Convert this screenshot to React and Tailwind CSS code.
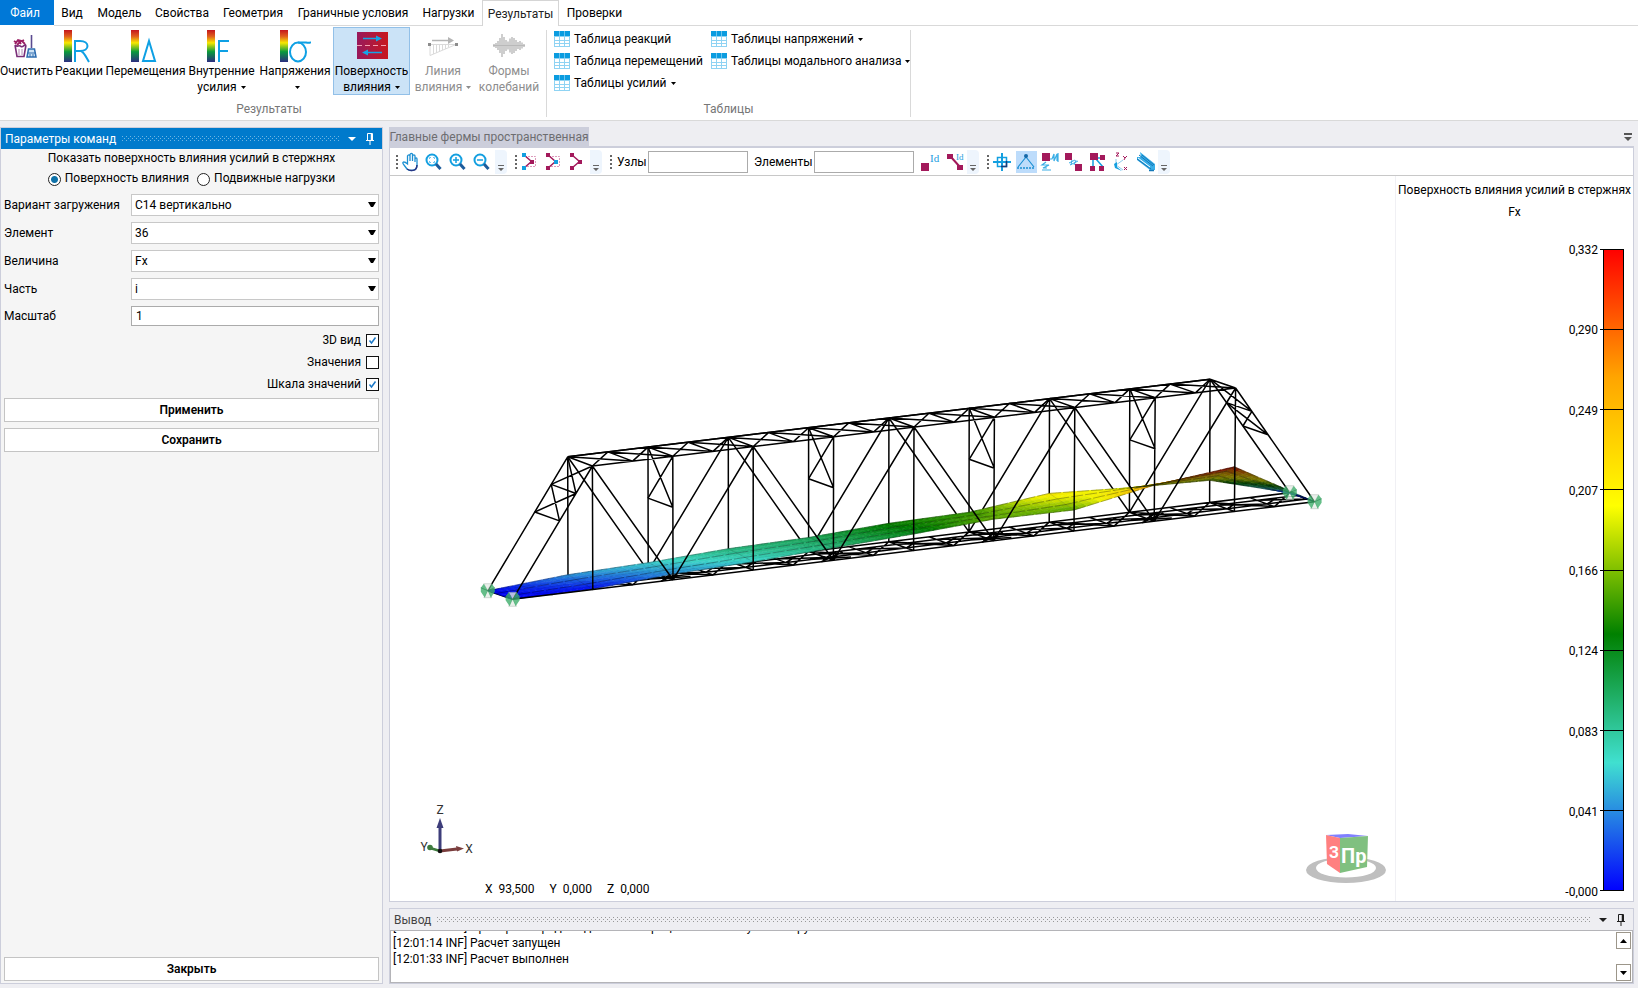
import React, { useState } from "react";

const tabs = [
  { name: "Вид", width: "w-[36px]" },
  { name: "Модель", width: "w-[59px]" },
  { name: "Свойства", width: "w-[66px]" },
  { name: "Геометрия", width: "w-[76px]" },
  { name: "Граничные условия", width: "w-[124px]" },
  { name: "Нагрузки", width: "w-[67px]" },
  { name: "Результаты", width: "w-[77px]" },
  { name: "Проверки", width: "w-[71px]" },
];

const legendValues = ["0,332", "0,290", "0,249", "0,207", "0,166", "0,124", "0,083", "0,041", "-0,000"];

// ---------- ribbon icons ----------

const Spectrum = ({ children }) => (
  <svg width="32" height="34" viewBox="0 0 32 34" fill="none" stroke="#0ea0e4" strokeWidth="2">
    <defs>
      <linearGradient id="spectrum" x1="0" y1="0" x2="0" y2="1">
        <stop offset="0" stopColor="#c4161c" />
        <stop offset="0.2" stopColor="#e0601c" />
        <stop offset="0.4" stopColor="#f8e800" />
        <stop offset="0.68" stopColor="#0a9a3c" />
        <stop offset="1" stopColor="#2c2c80" />
      </linearGradient>
    </defs>
    <rect x="1" y="1" width="8" height="32" fill="url(#spectrum)" stroke="none" />
    {children}
  </svg>
);

const CleanIcon = () => (
  <svg width="32" height="34" viewBox="0 0 32 34" fill="none">
    <path d="M4 16 L6 27.500 H13 L15 16 M4 16 C6 19 8 15 10 17.500 C12 19 13 15 15 16" stroke="#7a2e78" strokeWidth="1.600" />
    <path d="M3 12 L6 14 M7 11 L10 15 M4 15 L7 11 L11 12 L14 15 M11 12 L13 11 M6 16 L10 12" stroke="#9b1f64" strokeWidth="1.800" />
    <path d="M8 20 V26 M11 20 V26" stroke="#b58ab5" />
    <path d="M20.500 6 V19" stroke="#5a4a90" strokeWidth="1.600" />
    <path d="M17.500 20 H23.500 L25 28 H16 Z" fill="#cfe3f5" stroke="#2f6db0" strokeWidth="1.500" />
    <path d="M17 24 H25 M19 25 V28 M22 25 V28" stroke="#2f6db0" />
  </svg>
);

const SurfaceIcon = () => (
  <svg width="32" height="34" viewBox="0 0 32 34" fill="none">
    <defs>
      <linearGradient id="surfaceBg" x1="0" y1="0" x2="1" y2="0">
        <stop offset="0" stopColor="#98195c" />
        <stop offset="1" stopColor="#c8171f" />
      </linearGradient>
    </defs>
    <rect x="1" y="3" width="31" height="27" fill="url(#surfaceBg)" />
    <path d="M1 16.500 H32" stroke="#f4a0b0" strokeDasharray="5 3" />
    <path d="M7 9.500 H23 M10 23.500 H26" stroke="#14a5e8" strokeWidth="1.500" />
    <path d="M20 6.500 L26 9.500 L20 12.500 Z M12 20.500 L6 23.500 L12 26.500 Z" fill="#14a5e8" />
  </svg>
);

const LineIcon = () => (
  <svg width="32" height="34" viewBox="0 0 32 34" fill="none" stroke="#dadada">
    <path d="M5 11.500 H22" strokeWidth="1.500" stroke="#b4b4b4" />
    <path d="M21 8 L27 11.500 L21 15 Z" fill="#b4b4b4" stroke="none" />
    <path d="M3 15.500 H29 L3 26.500 Z M6.500 16 V25 M9.500 16 V24 M12.500 16 V22 M15.500 16 V21 M18.500 16 V20 M21.500 16 V18" />
    <path d="M1 14 h3 v3 h-3 z M28 14 h3 v3 h-3 z" fill="#8c8c8c" stroke="none" />
  </svg>
);

const waveHeights = [3, 5, 9, 15, 23, 17, 11, 8, 14, 17, 15, 11, 7, 9, 6, 3];

const WaveIcon = () => (
  <svg width="32" height="34" viewBox="0 0 32 34" stroke="#b9b9b9" strokeWidth="1.400">
    {waveHeights.map((h, i) => (
      <line key={i} x1={1 + i * 2} x2={1 + i * 2} y1={16.5 - h / 2} y2={16.5 + h / 2} />
    ))}
    <line x1="0" x2="32" y1="16.500" y2="16.500" strokeWidth="1" />
  </svg>
);

const TableIcon = () => (
  <svg width="16" height="16" viewBox="0 0 16 16" className="shrink-0">
    <rect width="16" height="16" fill="#8fd3f3" />
    <rect width="16" height="5" fill="#0a9ce0" />
    <path d="M5.500 0 V5 M10.500 0 V5" stroke="#6cc4ee" />
    <path d="M1 6 h4 v3 h-4 z M6 6 h4 v3 h-4 z M11 6 h4 v3 h-4 z M1 10 h4 v2 h-4 z M6 10 h4 v2 h-4 z M11 10 h4 v2 h-4 z M1 13 h4 v2 h-4 z M6 13 h4 v2 h-4 z M11 13 h4 v2 h-4 z" fill="#fff" />
  </svg>
);

const Caret = () => (
  <svg width="5" height="3" viewBox="0 0 5 3" className="ml-1 inline-block shrink-0 align-middle" fill="currentColor">
    <path d="M0 0 H5 L2.500 3 Z" />
  </svg>
);

const RibbonButton = ({ icon, lines, caret, width, active, disabled }) => (
  <button
    disabled={disabled}
    className={`flex h-[68px] shrink-0 flex-col items-center border ${width} ${
      active ? "border-[#92c0e8] bg-[#cbe3f7]" : "border-transparent"
    } ${disabled ? "text-[#8d8d8d]" : "text-black"}`}
  >
    <span className="mt-px h-[34px]">{icon}</span>
    {lines.map((line, i) => (
      <span key={i} className="block h-4 whitespace-nowrap leading-4">
        {line}
        {caret && i === lines.length - 1 && <Caret />}
      </span>
    ))}
  </button>
);

const TableButton = ({ label, caret }) => (
  <button className="flex h-[22px] items-center whitespace-nowrap">
    <TableIcon />
    <span className="ml-1">{label}</span>
    {caret && <Caret />}
  </button>
);

const Ribbon = () => (
  <header className="shrink-0 border-b border-[#d9d9d9] bg-white">
    <nav className="flex h-[26px]">
      <button className="h-[25px] w-[54px] shrink-0 bg-[#0078d7] pr-1 text-white">Файл</button>
      {tabs.map((tab) => (
        <button
          key={tab.name}
          className={`h-[26px] shrink-0 whitespace-nowrap pt-px text-center ${tab.width} ${
            tab.name === "Результаты"
              ? "border border-b-0 border-[#d5d5d5] text-[#222]"
              : "border-b border-[#d9d9d9]"
          }`}
        >
          {tab.name}
        </button>
      ))}
      <div className="flex-1 border-b border-[#d9d9d9]" />
    </nav>
    <div className="flex h-[94px] pt-px">
      <section className="flex w-[546px] shrink-0 flex-col">
        <div className="flex">
          <RibbonButton width="w-[53px]" icon={<CleanIcon />} lines={["Очистить"]} />
          <RibbonButton
            width="w-[52px]"
            icon={<Spectrum><path d="M12 33 V12 H17 C27 12 27 22 17 22 H12 M18 22 C21 23 23 28 26 33" /></Spectrum>}
            lines={["Реакции"]}
          />
          <RibbonButton
            width="w-[81px]"
            icon={<Spectrum><path d="M13 32 L19 12 L25 32 Z" /></Spectrum>}
            lines={["Перемещения"]}
          />
          <RibbonButton
            width="w-[71px]"
            icon={<Spectrum><path d="M13 33 V12 H23 M13 22 H22" /></Spectrum>}
            lines={["Внутренние", "усилия"]}
            caret
          />
          <RibbonButton
            width="w-[76px]"
            icon={<Spectrum><ellipse cx="19" cy="23" rx="8" ry="9.500" /><path d="M19 13.500 H27 C29 14 31 14 32 13" /></Spectrum>}
            lines={["Напряжения", ""]}
            caret
          />
          <RibbonButton width="w-[77px]" icon={<SurfaceIcon />} lines={["Поверхность", "влияния"]} caret active />
          <RibbonButton width="w-[66px]" icon={<LineIcon />} lines={["Линия", "влияния"]} caret disabled />
          <RibbonButton width="w-[66px]" icon={<WaveIcon />} lines={["Формы", "колебаний"]} disabled />
        </div>
        <div className="mt-[6px] pr-2 text-center leading-4 text-[#777]">Результаты</div>
      </section>
      <section className="my-[3px] flex flex-col border-x border-[#d9d9d9] px-[7px]">
        <div className="-mt-[2px] grid grid-cols-[157px_192px]">
          <TableButton label="Таблица реакций" />
          <TableButton label="Таблицы напряжений" caret />
          <TableButton label="Таблица перемещений" />
          <TableButton label="Таблицы модального анализа" caret />
          <TableButton label="Таблицы усилий" caret />
        </div>
        <div className="mt-[7px] text-center leading-4 text-[#777]">Таблицы</div>
      </section>
    </div>
  </header>
);

// ---------- shared bits ----------

const PinIcon = () => (
  <svg width="8" height="12" viewBox="0 0 8 12" fill="none" stroke="currentColor">
    <path d="M1.500 7 V0.500 H6.500 V7 M0 7.500 H8 M4 8 V12" />
    <path d="M5.500 1 V7" strokeWidth="1.500" />
  </svg>
);

const Arrow = () => (
  <svg width="8" height="4" viewBox="0 0 8 4" fill="currentColor">
    <path d="M0 0 H8 L4 4 Z" />
  </svg>
);

const Grip = ({ id, color }) => (
  <svg className="h-[5px] min-w-0 flex-1" aria-hidden="true">
    <defs>
      <pattern id={id} width="4" height="4" patternUnits="userSpaceOnUse">
        <path d="M0 0 h1 v1 h-1 z M2 2 h1 v1 h-1 z" fill={color} />
      </pattern>
    </defs>
    <rect width="100%" height="5" fill={`url(#${id})`} />
  </svg>
);

// ---------- left panel ----------

const SelectRow = ({ id, label, value }) => (
  <div className="mb-[6px] flex items-center">
    <label htmlFor={id} className="w-[127px] shrink-0">{label}</label>
    <div className="relative flex-1">
      <select id={id} className="block h-[22px] w-full appearance-none border border-[#c8c8c8] bg-white px-[3px] leading-4">
        <option>{value}</option>
      </select>
      <svg className="pointer-events-none absolute top-[8px] right-[3px]" width="8" height="6" viewBox="0 0 8 6">
        <path d="M0 0 H8 L5 5 H3 Z" />
      </svg>
    </div>
  </div>
);

const Radio = ({ label, checked, onChange }) => (
  <label className="flex items-center">
    <input
      type="radio"
      name="mode"
      checked={checked}
      onChange={onChange}
      className="mt-[3px] mr-1 size-[13px] appearance-none rounded-full border border-[#222] bg-white bg-[radial-gradient(circle,#0f72a8_3px,transparent_4px)] not-checked:bg-none"
    />
    {label}
  </label>
);

const Check = ({ label, defaultChecked }) => (
  <label className="flex h-[22px] items-center justify-end">
    {label}
    <span className="relative ml-[5px] size-[13px]">
      <input
        type="checkbox"
        defaultChecked={defaultChecked}
        className="peer block size-[13px] appearance-none border border-[#111] bg-white"
      />
      <svg
        className="pointer-events-none absolute inset-0 hidden peer-checked:block"
        width="13" height="13" viewBox="0 0 13 13" fill="none" stroke="#1a78c8" strokeWidth="1.500"
      >
        <path d="M3.500 6.500 L5.500 9 L9.500 3.500" />
      </svg>
    </span>
  </label>
);

const PanelButton = ({ children }) => (
  <button className="h-6 w-full border border-[#c4c4c4] bg-white font-semibold">{children}</button>
);

const ParamsPanel = () => {
  const [mode, setMode] = useState("surface");

  return (
    <aside className="flex w-[383px] shrink-0 flex-col border border-[#cccedb] bg-[#f5f5f5]">
      <div className="flex h-[21px] shrink-0 items-center bg-[#007acc] pr-2 pl-1 text-white">
        <span className="mr-[6px]">Параметры команд</span>
        <Grip id="gripBlue" color="#6fb5e3" />
        <button className="ml-2" aria-label="Меню панели"><Arrow /></button>
        <button className="ml-[10px]" aria-label="Закрепить панель"><PinIcon /></button>
      </div>
      <div className="flex flex-1 flex-col px-[3px] pb-[2px]">
        <p className="mt-px text-center leading-4">Показать поверхность влияния усилий в стержнях</p>
        <div className="mt-[2px] mb-[6px] flex h-5 justify-center gap-2">
          <Radio label="Поверхность влияния" checked={mode === "surface"} onChange={() => setMode("surface")} />
          <Radio label="Подвижные нагрузки" checked={mode === "moving"} onChange={() => setMode("moving")} />
        </div>
        <SelectRow id="loadCase" label="Вариант загружения" value="С14 вертикально" />
        <SelectRow id="element" label="Элемент" value="36" />
        <SelectRow id="quantity" label="Величина" value="Fx" />
        <SelectRow id="part" label="Часть" value="i" />
        <div className="mb-[3px] flex items-center">
          <label htmlFor="scale" className="w-[127px] shrink-0">Масштаб</label>
          <input id="scale" defaultValue="1" className="h-5 min-w-0 flex-1 border border-[#ababab] bg-white px-1" />
        </div>
        <Check label="3D вид" defaultChecked />
        <Check label="Значения" />
        <Check label="Шкала значений" defaultChecked />
        <div className="mt-[3px] flex flex-1 flex-col gap-[6px]">
          <PanelButton>Применить</PanelButton>
          <PanelButton>Сохранить</PanelButton>
          <div className="mt-auto">
            <PanelButton>Закрыть</PanelButton>
          </div>
        </div>
      </div>
    </aside>
  );
};

// ---------- view toolbar ----------

const Dots = () => (
  <svg width="4" height="16" viewBox="0 0 4 16" className="shrink-0" fill="#666">
    <path d="M1 1 h2 v2 h-2 z M1 5 h2 v2 h-2 z M1 9 h2 v2 h-2 z M1 13 h2 v2 h-2 z" />
  </svg>
);

const Overflow = () => (
  <button className="mr-[7px] flex h-6 w-3 shrink-0 items-end justify-center rounded-r-sm bg-[#eef5fd] pb-[3px]" aria-label="Ещё">
    <svg width="6" height="6" viewBox="0 0 6 6" fill="#666">
      <path d="M0 0 h6 v1 h-6 z M0 3 h6 l-3 3 z" />
    </svg>
  </button>
);

const Tool = ({ label, active, children }) => (
  <button aria-label={label} className="flex h-[22px] w-6 shrink-0 items-center justify-center">
    <span className={`flex h-[22px] w-[21px] items-center justify-center ${active ? "bg-[#bddcfb]" : ""}`}>
      <svg width="20" height="20" viewBox="0 0 20 20" fill="none" strokeWidth="1.500">{children}</svg>
    </span>
  </button>
);

const Lens = ({ children }) => (
  <g transform="translate(-1 0)">
    <circle cx="8" cy="8" r="5.500" stroke="#139fe0" strokeWidth="2" />
    <path d="M12 12 L16.500 17" stroke="#1c5c9c" strokeWidth="3" />
    {children}
  </g>
);

const Hinge = ({ top, mid, dashed }) => (
  <>
    {dashed && <path d="M5 4.500 H15.500 V14.500 H5" stroke="#dc9abb" strokeWidth="1" strokeDasharray="2 1" />}
    <path d="M4 3 L11.500 9.500 L4 16" stroke="#a3195b" />
    <rect x="2" y="1" width="4" height="4" fill={top} />
    <rect x="10" y="8" width="4" height="4" fill={mid} />
    <rect x="2" y="14" width="4" height="4" fill={top} />
  </>
);

const Toolbar = () => (
  <div className="flex h-[28px] shrink-0 items-center border-b border-[#c8c8c8] bg-white pl-[5px]">
    <Dots />
    <Tool label="Сдвиг">
      <path d="M5 11 L3 10 C1 10 2 12 3 13 L6 17 C7 18.500 8 18.500 10 18.500 C14 18.500 16 17 16 13 V7 C16 5.500 14.500 5.500 14 7 V10 M14 8 V4 C14 2.500 12 2.500 11.500 4 V9 M11.500 6 V2.500 C11.500 1 9.500 1 9 2.500 V9 M9 6 V4 C9 2.500 7 2.500 6.500 4 L6.500 12 L4 10" stroke="#1b8fd2" strokeWidth="1.300" />
      <path d="M6 17 C9 19 16 20 16 13" stroke="#283583" />
    </Tool>
    <Tool label="Показать всё"><Lens><path d="M5.500 7 V5.500 H7 M9 5.500 H10.500 V7 M10.500 9 V10.500 H9 M7 10.500 H5.500 V9" stroke="#6bc3ee" strokeWidth="1" /></Lens></Tool>
    <Tool label="Увеличить"><Lens><path d="M5 8 H11 M8 5 V11" stroke="#139fe0" /></Lens></Tool>
    <Tool label="Уменьшить"><Lens><path d="M5 8 H11" stroke="#139fe0" /></Lens></Tool>
    <Overflow />
    <Dots />
    <Tool label="Выбор узлов"><Hinge top="#139fe0" mid="#a3195b" dashed /></Tool>
    <Tool label="Выбор элементов"><Hinge top="#a3195b" mid="#139fe0" dashed /></Tool>
    <Tool label="Выбор всего"><Hinge top="#a3195b" mid="#a3195b" /></Tool>
    <Overflow />
    <Dots />
    <label htmlFor="nodes" className="ml-[4px] w-[31px] shrink-0 whitespace-nowrap">Узлы</label>
    <input id="nodes" className="h-[22px] w-[100px] shrink-0 border border-[#ababab] bg-white px-1" />
    <label htmlFor="elements" className="ml-[6px] w-[60px] shrink-0 whitespace-nowrap">Элементы</label>
    <input id="elements" className="mr-[5px] h-[22px] w-[100px] shrink-0 border border-[#ababab] bg-white px-1" />
    <Tool label="Номера узлов">
      <rect x="0" y="11" width="8" height="8" fill="#a3195b" />
      <text x="9" y="10" fontSize="11" fill="#1b9de0" fontFamily="Liberation Serif, serif">Id</text>
    </Tool>
    <Tool label="Номера элементов">
      <path d="M6 5 L15 15" stroke="#a3195b" strokeWidth="2" />
      <rect x="2" y="2" width="6" height="5" fill="#a3195b" />
      <rect x="12" y="13" width="6" height="5" fill="#a3195b" />
      <text x="11" y="8" fontSize="9" fill="#1b9de0" fontFamily="Liberation Serif, serif">Id</text>
    </Tool>
    <Overflow />
    <Dots />
    <Tool label="Узлы">
      <path d="M10 1 V19 M1 10 H19" stroke="#139fe0" strokeWidth="2" />
      <rect x="5.500" y="5.500" width="9" height="9" stroke="#139fe0" />
      <path d="M14.500 9 V14.500 H9" stroke="#1d3c78" />
    </Tool>
    <Tool label="Опоры" active>
      <path d="M10 5 L2 15 M10 5 L18 15" stroke="#1b8fd2" strokeWidth="1.200" />
      <path d="M1 16 H19" stroke="#1b8fd2" strokeDasharray="2 1" />
      <circle cx="10" cy="4" r="2" fill="#1668a8" />
    </Tool>
    <Tool label="Пружины">
      <rect x="2" y="1" width="8" height="8" fill="#a3195b" />
      <path d="M10 7 L12 7 L14 2 L14 9 L17 2 L17 9 M18 1 V10 M6 10 L2 13 L9 13 L3 16 L7 16 M2 18 H11" stroke="#3aaee6" strokeWidth="1.200" />
    </Tool>
    <Tool label="Связи">
      <rect x="1" y="1" width="7" height="7" fill="#a3195b" />
      <rect x="11" y="12" width="7" height="7" fill="#a3195b" />
      <path d="M5 11 L11 8 M6 13 L14 9 M8 8 L7 13 M12 8 L10 13" stroke="#3aaee6" strokeWidth="1" />
    </Tool>
    <Tool label="Жёсткие тела">
      <path d="M5 5 V14 M8 7 L15 15 M8 6 H14" stroke="#139fe0" />
      <path d="M2 1 h8 v7 h-8 z M12 3 h5 v5 h-5 z M2 14 h5 v5 h-5 z M11 14 h5 v5 h-5 z" fill="#a3195b" />
    </Tool>
    <Tool label="Местные оси">
      <path d="M4 7 V13 L11 18 M4 13 L11 8" stroke="#8bccee" strokeWidth="1" />
      <path d="M2 12 L5 10 V15 L10 19 L3 16 Z" fill="#139fe0" />
      <path d="M4 1 H7 L4 4 H7 M11 4 L13 6 L15 4 M13 6 L12 8 M12 15 L15 18 M15 15 L12 18" stroke="#a3195b" strokeWidth="1" />
    </Tool>
    <Tool label="Сечения">
      <path d="M4 0 L19 12 V18 H14 L1 8 V5 L5 5 Z" fill="#37aee8" />
      <path d="M3 3 L17 14 M1 7 L15 17 M6 3 L18 13" stroke="#1478b8" strokeWidth="1" />
      <path d="M2 6 L14 15" stroke="#fff" strokeWidth="1" />
      <path d="M13 18.500 H18" stroke="#1478b8" />
    </Tool>
    <Overflow />
  </div>
);

// ---------- bridge model ----------

const range = (n) => Array.from({ length: n }, (_, i) => i);
const mix = (a, b, t) => [a[0] + (b[0] - a[0]) * t, a[1] + (b[1] - a[1]) * t];

// screen coordinates of the truss nodes, far and near plane
const topFar = (t) => [567.7 + 80.3 * t, 456.8 - 9.7 * t];
const topNear = (t) => [592.4 + 80.4 * t, 466 - 9.75 * t];
const botFar = (k) => [487.8 + 80.2 * k, 590.7 - 9.8 * k];
const botNear = (k) => [512.6 + 80.2 * k, 599.3 - 9.76 * k];

const liftFar = [0, 6.2, 8.4, 12.6, 14, 18.4, 19.6, 28.7, 24.5, 22.2, 0];
const liftNear = [0, 0.5, 5.8, 8.3, 12.5, 16.5, 21.6, 21, 36, 44.7, 0];
const MAX_LIFT = 44.7;

const palette = [
  [0, 0, 255],
  [64, 224, 208],
  [0, 128, 0],
  [255, 255, 0],
  [255, 165, 0],
  [255, 0, 0],
];

const colorAt = (value, shade) => {
  const v = Math.max(0, Math.min(0.9999, value)) * 5;
  const i = Math.floor(v);
  const c = palette[i].map((p, n) => Math.round((p + (palette[i + 1][n] - p) * (v - i)) * shade));
  return `rgb(${c.join(",")})`;
};

const surfaceFar = (k) => [botFar(k)[0], botFar(k)[1] - liftFar[k]];
const surfaceNear = (k) => [botNear(k)[0], botNear(k)[1] - liftNear[k]];

const cells = [];
const NX = 12;
const NY = 6;
range(10).forEach((k) => {
  const point = (u, v) =>
    mix(mix(surfaceFar(k), surfaceFar(k + 1), u), mix(surfaceNear(k), surfaceNear(k + 1), u), v);
  const lift = (u, v) => {
    const far = liftFar[k] + (liftFar[k + 1] - liftFar[k]) * u;
    const near = liftNear[k] + (liftNear[k + 1] - liftNear[k]) * u;
    return (far + (near - far) * v) / MAX_LIFT;
  };
  range(NX).forEach((i) =>
    range(NY).forEach((j) => {
      const u = i / NX;
      const v = j / NY;
      const pts = [point(u, v), point(u + 1 / NX, v), point(u + 1 / NX, v + 1 / NY), point(u, v + 1 / NY)];
      const turned = (pts[1][0] - pts[0][0]) * (pts[3][1] - pts[0][1]) - (pts[1][1] - pts[0][1]) * (pts[3][0] - pts[0][0]) < 0;
      cells.push({
        points: pts.map((p) => p.map((n) => n.toFixed(1)).join(",")).join(" "),
        fill: colorAt(lift(u + 0.5 / NX, v + 0.5 / NY), turned ? 0.48 : 0.95),
      });
    })
  );
});

const seg = (a, b) => `M${a[0].toFixed(1)} ${a[1].toFixed(1)}L${b[0].toFixed(1)} ${b[1].toFixed(1)}`;

const sideFrame = (top, bot) => [
  seg(top(0), top(8)),
  seg(bot(0), bot(10)),
  seg(top(0), bot(0)),
  seg(top(8), bot(10)),
  ...range(9).map((t) => seg(top(t), bot(t + 1))),
  ...[0, 2, 4, 6].map((t) => seg(top(t), bot(t + 2))),
  ...[2, 4, 6, 8].map((t) => seg(top(t), bot(t))),
];

const topBracing = range(8).flatMap((t) => [
  seg(topFar(t), topNear(t)),
  seg(topNear(t), topFar(t + 0.5)),
  seg(topFar(t), topNear(t + 0.5)),
  seg(topFar(t + 0.5), topNear(t + 0.5)),
  seg(topNear(t + 0.5), topFar(t + 1)),
  seg(topFar(t + 0.5), topNear(t + 1)),
]);

const crossFrames = [1, 3, 5, 7].flatMap((t) => {
  const far = topFar(t);
  const near = topNear(t);
  const farLow = [far[0], far[1] + 51];
  const nearLow = [near[0], near[1] + 51];
  return [seg(far, nearLow), seg(near, farLow), seg(farLow, nearLow), seg(far, near)];
});

const portal = (far, near, farEnd, nearEnd) => {
  const p1 = mix(far, farEnd, 0.206);
  const p2 = mix(far, farEnd, 0.412);
  const q1 = mix(near, nearEnd, 0.206);
  const q2 = mix(near, nearEnd, 0.412);
  return [seg(far, near), seg(far, q1), seg(near, p1), seg(p1, q1), seg(p1, q2), seg(q1, p2), seg(p2, q2)];
};

const across = (k, v) => mix(botFar(k), botNear(k), v);

const deck = [
  seg(across(0, 0.3), across(10, 0.3)),
  seg(across(0, 0.7), across(10, 0.7)),
  ...range(21).map((i) => seg(botFar(i / 2), botNear(i / 2))),
  ...range(20).flatMap((i) => [
    seg(across(i / 2, 0.3), across(i / 2 + 0.5, 0.7)),
    seg(across(i / 2, 0.7), across(i / 2 + 0.25, 0.3)),
    seg(across(i / 2, i % 2 ? 1 : 0), across(i / 2 + 0.5, i % 2 ? 0 : 1)),
  ]),
];

// gusset clusters where the diagonals meet the lower chord
const gussets = [2, 4, 6, 8].flatMap((k) => [
  seg(across(k - 0.2, 0.7), across(k + 0.25, 0.9)),
  seg(across(k - 0.15, 1), across(k + 0.3, 0.4)),
  seg(across(k - 0.1, 0.9), across(k + 0.15, 0.6)),
]);

const farLines = [...sideFrame(topFar, botFar), ...deck, ...gussets].join("");
const nearLines = [
  ...sideFrame(topNear, botNear),
  seg(topFar(0), topFar(8)),
  ...topBracing,
  ...crossFrames,
  ...portal(topFar(0), topNear(0), botFar(0), botNear(0)),
  ...portal(topFar(8), topNear(8), botFar(10), botNear(10)),
].join("");

const surfaceLines = range(10)
  .flatMap((k) => [0, 0.33, 0.67, 1].map((v) =>
    seg(mix(surfaceFar(k), surfaceNear(k), v), mix(surfaceFar(k + 1), surfaceNear(k + 1), v))
  ))
  .join("");
const surfaceRibs = range(11).map((k) => seg(surfaceFar(k), surfaceNear(k))).join("");

const Support = ({ at }) => (
  <g transform={`translate(${at[0]} ${at[1]})`}>
    <path d="M-4 -7 H4 L0 0 Z M0 0 L4 7 H-4 Z" fill="#e4ede6" stroke="#9aa89e" strokeWidth="0.500" opacity="0.8" />
    <path d="M-4 -7 L-7 -3 L-7 1 L-3 7 L0 0 Z M4 -7 L7 -3 L7 1 L3 7 L0 0 Z" fill="#3fae6b" opacity="0.8" />
    <path d="M-7 -3 L0 0 L7 -3" stroke="#247a46" strokeWidth="0.500" fill="none" />
  </g>
);

const Model = () => (
  <svg className="h-full w-full" viewBox="390 176 1006 725" preserveAspectRatio="xMinYMin slice" fill="none">
    <path d={farLines} stroke="#000" strokeWidth="1.500" />
    {cells.map((cell, i) => (
      <polygon key={i} points={cell.points} fill={cell.fill} stroke={cell.fill} strokeWidth="0.500" />
    ))}
    <path d={surfaceLines} stroke="#000" strokeWidth="0.600" strokeDasharray="12 2" opacity="0.5" />
    <path d={surfaceRibs} stroke="#000" strokeWidth="0.500" opacity="0.3" />
    <path d={nearLines} stroke="#000" strokeWidth="1.500" />
    {[botFar(0), botNear(0), botFar(10), botNear(10)].map((at, i) => (
      <Support key={i} at={at} />
    ))}

    {/* axes */}
    <path d="M440 851 V826" stroke="#3d3d7a" strokeWidth="3" />
    <path d="M440 818 L443.500 828 H436.500 Z" fill="#3d3d7a" />
    <path d="M440 851 L457 849" stroke="#7a3d3d" strokeWidth="3" />
    <path d="M464 848.500 L456 846 L457 851.500 Z" fill="#7a3d3d" />
    <path d="M440 851 L430 848" stroke="#3d7a3d" strokeWidth="2.500" />
    <circle cx="430" cy="847.500" r="2.800" fill="#3d7a3d" />
    <circle cx="440" cy="851" r="2.300" fill="#111" />
    <g fill="#333" fontSize="12" textAnchor="middle">
      <text x="440" y="814">Z</text>
      <text x="424" y="851">Y</text>
      <text x="469" y="853">X</text>
    </g>

    {/* view cube */}
    <path
      d="M1306 870 a40 13 0 1 0 80 0 a40 13 0 1 0 -80 0 Z M1316 868 a30 9.500 0 1 0 60 0 a30 9.500 0 1 0 -60 0 Z"
      fill="#bfbfbf"
      fillRule="evenodd"
    />
    <path d="M1326 835 L1348 834 L1368 836 L1340 838 Z" fill="#8080ff" />
    <path d="M1326 835 L1340 838 V873 L1327 864 Z" fill="#ff8080" />
    <path d="M1340 838 L1368 836 L1367 867 L1340 873 Z" fill="#80c080" />
    <g fill="#fff" fontWeight="700">
      <text x="1329" y="858" fontSize="16">З</text>
      <text x="1341" y="863" fontSize="20">Пр</text>
    </g>
  </svg>
);

const Legend = () => (
  <aside className="flex w-[238px] shrink-0 flex-col border-l border-[#f0f0f4] bg-white pb-[10px]">
    <div className="pt-[3px] text-center whitespace-nowrap">
      <p className="leading-[22px]">Поверхность влияния усилий в стержнях</p>
      <p className="leading-[22px]">Fx</p>
    </div>
    <div className="mt-[26px] mr-[9px] flex flex-1 justify-end">
      <ul className="-my-2 mr-[2px] flex flex-col justify-between text-right">
        {legendValues.map((value) => (
          <li key={value} className="h-4 leading-[18px]">{value}</li>
        ))}
      </ul>
      <div className="flex w-[3px] flex-col justify-between">
        {legendValues.map((value) => (
          <span key={value} className="h-px bg-black" />
        ))}
      </div>
      <div className="flex w-[21px] flex-col justify-between border-x border-black bg-[linear-gradient(#ff0000,#ffa500,#ffff00,#008000,#40e0d0,#0000ff)]">
        {legendValues.map((value) => (
          <span key={value} className="h-px bg-black" />
        ))}
      </div>
    </div>
  </aside>
);

const Viewport = () => (
  <section className="flex min-h-0 flex-1 flex-col">
    <div className="flex h-[21px] shrink-0 items-end justify-between border-b-2 border-[#cccedb]">
      <button className="h-[19px] min-w-[200px] bg-[#cccedb] pt-px text-[#6d6d70] whitespace-nowrap">
        Главные фермы пространственная
      </button>
      <button className="mr-[2px] mb-[5px] text-[#555]" aria-label="Список окон">
        <svg width="8" height="8" viewBox="0 0 8 8" fill="currentColor">
          <path d="M0 0 h8 v2 h-8 z M0 4 h8 l-4 4 z" />
        </svg>
      </button>
    </div>
    <div className="flex min-h-0 flex-1 flex-col border border-t-0 border-[#cccedb] bg-white">
      <Toolbar />
      <div className="flex min-h-0 flex-1">
        <div className="relative min-w-0 flex-1">
          <Model />
          <div className="absolute bottom-1 left-[95px] flex gap-[15px] leading-4">
            <span>X&nbsp; 93,500</span>
            <span>Y&nbsp; 0,000</span>
            <span>Z&nbsp; 0,000</span>
          </div>
        </div>
        <Legend />
      </div>
    </div>
  </section>
);

const Output = () => (
  <section className="flex h-[76px] shrink-0 flex-col border border-[#cccedb]">
    <div className="flex h-[21px] shrink-0 items-center pr-2 pl-1 text-[#444]">
      <span className="mr-[6px]">Вывод</span>
      <Grip id="gripGray" color="#999" />
      <span className="flex items-center text-[#1e1e1e]">
        <button className="ml-2" aria-label="Меню панели"><Arrow /></button>
        <button className="ml-[10px]" aria-label="Закрепить панель"><PinIcon /></button>
      </span>
    </div>
    <div className="flex min-h-0 flex-1 border border-[#b4b4b8] bg-white">
      <div className="flex flex-1 flex-col justify-end overflow-hidden pb-[15px] pl-[2px] leading-4">
        <p>[12:01:12 INF] Проверка перед созданием матрицы жесткости узлов и грузов</p>
        <p>[12:01:14 INF] Расчет запущен</p>
        <p>[12:01:33 INF] Расчет выполнен</p>
      </div>
      <div className="flex flex-col justify-between p-px">
        <button className="flex h-[17px] w-[15px] items-center justify-center border border-[#9c968a]" aria-label="Вверх">
          <svg width="7" height="4" viewBox="0 0 7 4"><path d="M0 4 H7 L3.500 0 Z" /></svg>
        </button>
        <button className="flex h-[17px] w-[15px] items-center justify-center border border-[#9c968a]" aria-label="Вниз">
          <svg width="7" height="4" viewBox="0 0 7 4"><path d="M0 0 H7 L3.500 4 Z" /></svg>
        </button>
      </div>
    </div>
  </section>
);

const App = () => (
  <div className="flex h-screen flex-col overflow-hidden bg-[#eeeef2] font-['Roboto','Noto_Sans',sans-serif] text-[12px] text-black">
    <Ribbon />
    <div className="flex min-h-0 flex-1 gap-[6px] pt-[6px] pr-[4px] pb-[4px]">
      <ParamsPanel />
      <main className="flex min-w-0 flex-1 flex-col gap-[6px]">
        <Viewport />
        <Output />
      </main>
    </div>
  </div>
);

export default App;
